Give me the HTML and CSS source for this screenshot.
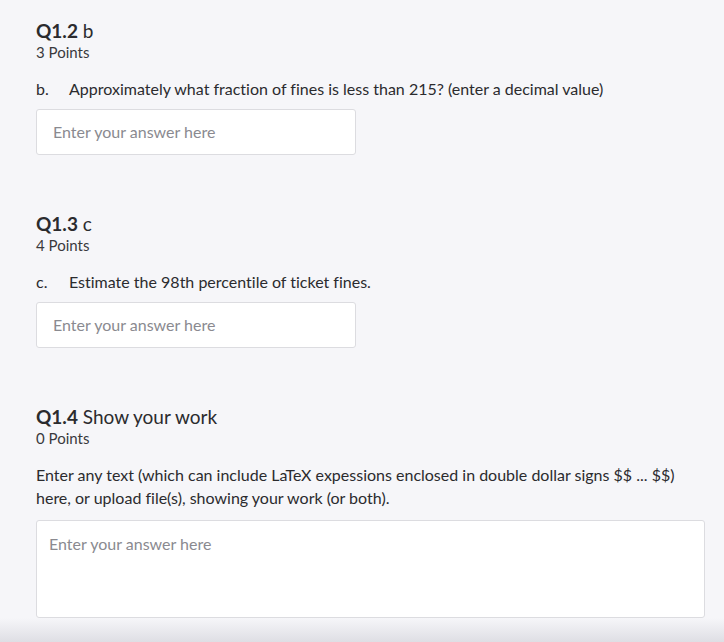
FILE: index.html
```html
<!DOCTYPE html>
<html>
<head>
<meta charset="utf-8">
<link rel="stylesheet" href="styles.css">
</head>
<body>
<main class="page">
  <section class="question">
    <h2 class="q-title"><span class="q-num">Q1.2</span> b</h2>
    <div class="q-points">3 Points</div>
    <p class="q-prompt"><span class="q-letter">b.</span><span>Approximately what fraction of fines is less than 215? (enter a decimal value)</span></p>
    <div class="answer-box short">Enter your answer here</div>
  </section>
  <section class="question">
    <h2 class="q-title"><span class="q-num">Q1.3</span> c</h2>
    <div class="q-points">4 Points</div>
    <p class="q-prompt"><span class="q-letter">c.</span><span>Estimate the 98th percentile of ticket fines.</span></p>
    <div class="answer-box short">Enter your answer here</div>
  </section>
  <section class="question">
    <h2 class="q-title"><span class="q-num">Q1.4</span> Show your work</h2>
    <div class="q-points">0 Points</div>
    <p class="q-text">Enter any text (which can include LaTeX expessions enclosed in double dollar signs $$ ... $$) here, or upload file(s), showing your work (or both).</p>
    <div class="answer-box long">Enter your answer here</div>
  </section>
  <div class="bottom-fade"></div>
</main>
</body>
</html>
```
FILE: styles.css
```css
html, body {
  margin: 0;
  padding: 0;
  background: #f6f6f9;
}
body {
  font-family: Lato, "Open Sans", sans-serif;
  font-variant-ligatures: none;
  color: #2b2b2e;
  width: 724px;
  height: 642px;
  overflow: hidden;
  position: relative;
}
.page {
  padding: 19px 20px 0 36px;
  display: flex;
  flex-direction: column;
  gap: 57px;
}
.question {
  display: flex;
  flex-direction: column;
}
.q-title {
  margin: 0;
  font-size: 19px;
  font-weight: 400;
  line-height: 24px;
}
.q-num {
  font-weight: 700;
}
.q-points {
  font-size: 15px;
  line-height: 20px;
  margin-top: -1px;
  color: #3a3a3d;
}
.q-prompt {
  margin: 16px 0 9px;
  font-size: 16px;
  line-height: 22px;
  display: flex;
}
.q-letter {
  width: 33px;
  flex: none;
}
.q-text {
  margin: 15px 0 11px;
  font-size: 16px;
  line-height: 23px;
  max-width: 668px;
}
.answer-box {
  background: #fff;
  border: 1px solid #dcdce0;
  border-radius: 3px;
  box-sizing: border-box;
  color: #8a8a90;
  font-size: 16px;
}
.answer-box.short {
  width: 320px;
  height: 46px;
  padding: 12px 16px;
  line-height: 20px;
}
.answer-box.long {
  width: 669px;
  height: 98px;
  padding: 13px 12px;
  line-height: 20px;
}
.bottom-fade {
  position: absolute;
  left: 0;
  right: 0;
  bottom: 0;
  height: 24px;
  background: linear-gradient(to bottom, rgba(225,225,230,0), rgba(222,222,228,1));
}
```
